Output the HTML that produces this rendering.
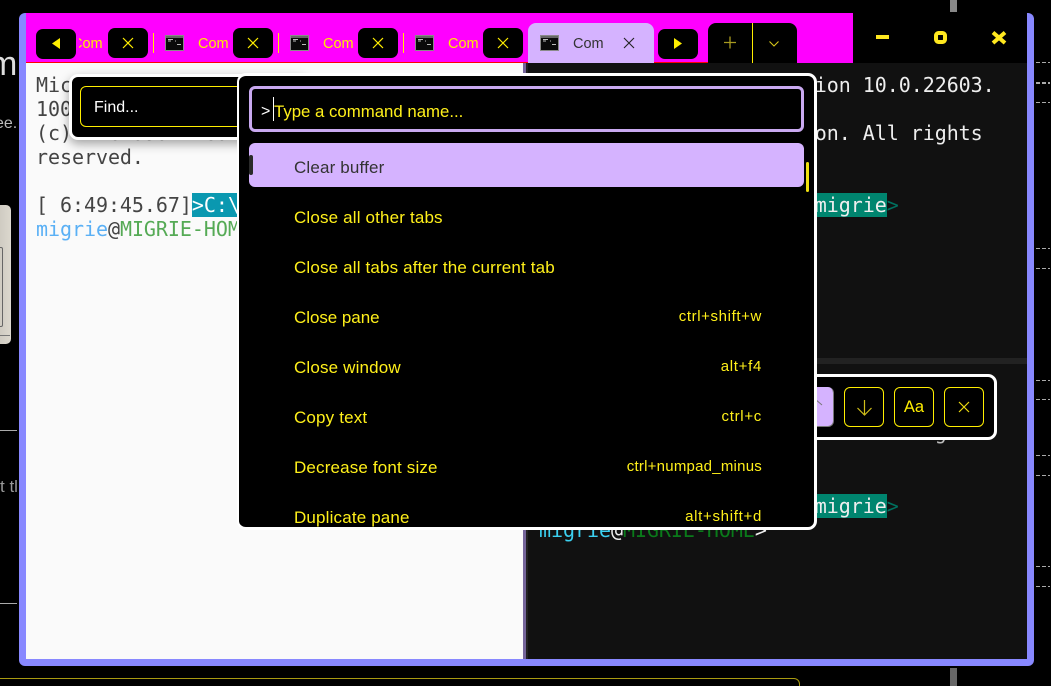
<!DOCTYPE html>
<html><head><meta charset="utf-8"><style>
*{box-sizing:border-box;margin:0;padding:0}
html,body{width:1051px;height:686px;overflow:hidden;background:#000}
body{position:relative;font-family:"Liberation Sans",sans-serif}
.a{position:absolute}
.t{position:absolute;white-space:pre;font-family:"DejaVu Sans Mono",monospace;font-size:20px;letter-spacing:-.05px;line-height:24px;height:24px}
.dash{position:absolute;left:1036px;width:14px;height:1px;background:repeating-linear-gradient(90deg,#aaa 0 4px,#000 4px 6px)}
.btn{position:absolute;background:#000;width:40px;height:30px;border-radius:7px}
.sep{position:absolute;width:1px;height:20px;top:33px;background:#ffee00}
.com{position:absolute;top:34px;font-size:14.5px;line-height:20px;color:#ffee00}
.ico{position:absolute;top:35px}
.row{position:absolute;left:294px;font-size:17px;letter-spacing:.16px;line-height:24px;color:#fff01a;white-space:pre}
.key{position:absolute;right:289px;font-size:15px;letter-spacing:.7px;line-height:20px;color:#fff01a;white-space:pre}
.fb{position:absolute;top:387px;width:40px;height:40px;border:1px solid #ffee00;border-radius:6px;background:#000}
svg{position:absolute;display:block;overflow:visible}
</style></head><body>
<!-- background behind the window -->
<div class="a" style="left:-11px;top:44px;font-size:34px;line-height:40px;color:#ddd">m</div>
<div class="a" style="left:-5px;top:114px;font-size:16px;line-height:20px;color:#bbb">ee.</div>
<div class="a" style="left:0;top:205px;width:11px;height:139px;background:linear-gradient(90deg,#cfcbc2,#dcd8ce);border-radius:0 5px 5px 0"></div>
<div class="a" style="left:-4px;top:247px;width:7px;height:80px;border:1px solid #666;border-radius:2px"></div>
<div class="a" style="left:0;top:335px;width:10px;height:1px;background:#777"></div>
<div class="a" style="left:0;top:430px;width:17px;height:1px;background:#aaa"></div>
<div class="a" style="left:0;top:477px;font-size:17px;line-height:20px;color:#999;white-space:pre">t tl</div>
<div class="a" style="left:0;top:603px;width:17px;height:1px;background:#aaa"></div>
<div class="a" style="left:-10px;top:678px;width:810px;height:30px;border:1px solid #a89a10;border-radius:6px"></div>
<div class="a" style="left:950px;top:0;width:7px;height:12px;background:#888"></div>
<div class="a" style="left:950px;top:668px;width:7px;height:18px;background:#666"></div>
<div class="dash" style="top:62px"></div><div class="dash" style="top:82px;height:2px"></div><div class="dash" style="top:102px"></div>
<div class="dash" style="top:248px"></div><div class="dash" style="top:268px"></div>
<div class="dash" style="top:380px"></div><div class="dash" style="top:399px"></div>
<div class="dash" style="top:455px"></div><div class="dash" style="top:475px"></div>
<div class="dash" style="top:566px"></div><div class="dash" style="top:586px"></div>

<!-- window -->
<div class="a" style="left:19px;top:13px;width:1015px;height:653px;background:#8888ff;border-radius:6px"></div>
<div class="a" style="left:26px;top:13px;width:1001px;height:50px;background:#000"></div>
<div class="a" style="left:26px;top:13px;width:827px;height:50px;background:#ff00ff"></div>
<div class="a" style="left:26px;top:62px;width:682px;height:1px;background:#ff0000"></div>

<!-- tabs -->
<div class="com" style="left:79px;width:25px;overflow:hidden"><span style="display:block;margin-left:-7px">Com</span></div>
<div class="btn" style="left:36px;top:29px"></div>
<svg style="left:0;top:0" width="1051" height="70"><path d="M60 38V49L52 43.5Z" fill="#ffee00"/></svg>

<div class="btn" style="left:108px;top:28px"></div>
<div class="sep" style="left:153px"></div>
<div class="com" style="left:198px">Com</div>
<div class="btn" style="left:233px;top:28px"></div>
<div class="sep" style="left:278px"></div>
<div class="com" style="left:323px">Com</div>
<div class="btn" style="left:358px;top:28px"></div>
<div class="sep" style="left:403px"></div>
<div class="com" style="left:448px">Com</div>
<div class="btn" style="left:483px;top:28px"></div>

<div class="a" style="left:528px;top:23px;width:126px;height:40px;background:#d5b3ff;border-radius:8px 8px 0 0"></div>
<div class="com" style="left:573px;color:#333">Com</div>
<div class="btn" style="left:658px;top:29px"></div>
<div class="a" style="left:708px;top:23px;width:89px;height:40px;background:#000;border-radius:8px 8px 0 0"></div>
<div class="a" style="left:752px;top:23px;width:1px;height:40px;background:#ffee00"></div>

<svg style="left:0;top:0" width="1051" height="70" fill="none">
 <g stroke="#ffee00" stroke-width="1.2">
  <path d="M123 38L133 48M133 38L123 48"/>
  <path d="M248 38L258 48M258 38L248 48"/>
  <path d="M373 38L383 48M383 38L373 48"/>
  <path d="M498 38L508 48M508 38L498 48"/>
 </g>
 <path d="M624 38L634 48M634 38L624 48" stroke="#222" stroke-width="1.1"/>
 <path d="M674 38V49L682 43.5Z" fill="#ffee00"/>
 <path d="M724 42.5H736M730 36.5V48.5" stroke="#a89a20" stroke-width="1.3"/>
 <path d="M769.5 41.5L774 46L778.5 41.5" stroke="#d8c81a" stroke-width="1.1"/>
 <path d="M876 37H889" stroke="#ffe81f" stroke-width="4"/>
 <rect x="936" y="33" width="9" height="9" rx="2.5" stroke="#ffe81f" stroke-width="4"/>
 <path d="M993 32.5L1005 43M1005 32.5L993 43" stroke="#ffe81f" stroke-width="4"/>
 <!-- terminal icons -->
 <g>
  <g><rect x="165.5" y="35.5" width="18" height="15" fill="#0a0a0a" stroke="#8a8a8a"/><rect x="166" y="36" width="17" height="2" fill="#666"/><path d="M168 39.5h5M168 41h3M175 41h1M177 44.5h4" stroke="#bbb" stroke-width="1"/></g>
  <g><rect x="290.5" y="35.5" width="18" height="15" fill="#0a0a0a" stroke="#8a8a8a"/><rect x="291" y="36" width="17" height="2" fill="#666"/><path d="M293 39.5h5M293 41h3M300 41h1M302 44.5h4" stroke="#bbb" stroke-width="1"/></g>
  <g><rect x="415.5" y="35.5" width="18" height="15" fill="#0a0a0a" stroke="#8a8a8a"/><rect x="416" y="36" width="17" height="2" fill="#666"/><path d="M418 39.5h5M418 41h3M425 41h1M427 44.5h4" stroke="#bbb" stroke-width="1"/></g>
  <g><rect x="540.5" y="35.5" width="18" height="15" fill="#0a0a0a" stroke="#8a8a8a"/><rect x="541" y="36" width="17" height="2" fill="#666"/><path d="M543 39.5h5M543 41h3M550 41h1M552 44.5h4" stroke="#bbb" stroke-width="1"/></g>
 </g>
</svg>

<!-- panes -->
<div class="a" style="left:26px;top:63px;width:497px;height:596px;background:#fafafa;overflow:hidden">
 <div class="t" style="left:10px;top:10px;color:#444">Microsoft Windows [Version 10.0.22603.</div>
 <div class="t" style="left:10px;top:34px;color:#444">1000]</div>
 <div class="t" style="left:10px;top:58px;color:#444">(c) Microsoft Corporation. All rights</div>
 <div class="t" style="left:10px;top:82px;color:#444">reserved.</div>
 <div class="t" style="left:10px;top:130px;color:#444">[ 6:49:45.67]<span style="background:#0a98b0;color:#fff">&gt;C:\Users\migrie</span></div>
 <div class="t" style="left:10px;top:154px;color:#444"><span style="color:#5ab0f5">migrie</span>@<span style="color:#55aa55">MIGRIE-HOME</span>&gt;</div>
</div>
<div class="a" style="left:523px;top:63px;width:3px;height:596px;background:#75659a"></div>
<div class="a" style="left:526px;top:63px;width:501px;height:596px;background:#111;border-left:2px solid #222;overflow:hidden">
 <div class="a" style="left:-2px;top:295px;width:503px;height:6px;background:#222"></div>
 <div class="t" style="left:11px;top:10px;color:#eee">Microsoft Windows [Version 10.0.22603.</div>
 <div class="t" style="left:11px;top:58px;color:#eee">(c) Microsoft Corporation. All rights</div>
 <div class="t" style="left:11px;top:130px;color:#eee">[ 6:49:45.67]<span style="background:#00856f;color:#eee">&gt;C:\Users\migrie</span><span style="color:#00705f">&gt;</span></div>
 <div class="t" style="left:11px;top:311px;color:#eee">Microsoft Windows [Version 10.0.22603.</div>
 <div class="t" style="left:11px;top:357px;color:#bbb">(c) Microsoft Corporation. All rights</div>
 <div class="t" style="left:11px;top:431px;color:#eee">[ 6:49:45.67]<span style="background:#00856f;color:#eee">&gt;C:\Users\migrie</span><span style="color:#00705f">&gt;</span></div>
 <div class="t" style="left:11px;top:455px;color:#eee"><span style="color:#3bd0f0">migrie</span>@<span style="color:#0a7a1a">MIGRIE-HOME</span>&gt;</div>
</div>

<!-- left find box -->
<div class="a" style="left:69px;top:74px;width:240px;height:66px;background:#000;border:3px solid #fff;border-radius:9px;box-shadow:0 4px 10px rgba(0,0,0,.35)"></div>
<div class="a" style="left:80px;top:86px;width:200px;height:41px;border:1px solid #ffee00;border-radius:6px"></div>
<div class="a" style="left:94px;top:98px;font-size:16px;line-height:20px;color:#fff">Find...</div>

<!-- right find box -->
<div class="a" style="left:700px;top:374px;width:297px;height:66px;background:#000;border:3px solid #fff;border-radius:9px"></div>
<div class="a" style="left:794px;top:387px;width:40px;height:40px;background:#d5b3ff;border-radius:6px;border-right:1px solid #777;border-bottom:1px solid #777"></div>
<div class="fb" style="left:844px"></div>
<div class="fb" style="left:894px"></div>
<div class="a" style="left:894px;top:397px;width:40px;text-align:center;font-size:16.5px;line-height:20px;color:#ffee00">Aa</div>
<div class="fb" style="left:944px"></div>
<svg style="left:0;top:0" width="1051" height="686" fill="none">
 <path d="M815 399L822 405" stroke="#777" stroke-width="1"/>
 <path d="M864.5 400V415M857.5 408L864.5 415L871.5 408" stroke="#d0be1a" stroke-width="1.2"/>
 <path d="M959 402L969 412M969 402L959 412" stroke="#ecdc10" stroke-width="1.2"/>
</svg>

<!-- command palette -->
<div class="a" style="left:237px;top:73px;width:580px;height:457px;background:#000;border:3px solid #fff;border-left-width:2px;border-radius:9px"></div>
<div class="a" style="left:239px;top:76px;width:575px;height:451px;overflow:hidden;border-radius:6px">
 <div style="position:absolute;left:-239px;top:-76px;width:1051px;height:686px">
  <div class="a" style="left:249px;top:86px;width:555px;height:46px;border:3px solid #c9a9f0;border-radius:6px"></div>
  <div class="a" style="left:261px;top:102px;font-size:16px;line-height:20px;color:#fff">&gt;</div>
  <div class="a" style="left:273px;top:97px;width:1px;height:24px;background:#fff"></div>
  <div class="a" style="left:274px;top:100px;font-size:16.8px;line-height:24px;color:#fff01a;white-space:pre">Type a command name...</div>
  <div class="a" style="left:249px;top:143px;width:555px;height:44px;background:#d5b3ff;border-radius:6px"></div>
  <div class="a" style="left:249px;top:155px;width:4px;height:20px;background:#2a2a2a;border-radius:2px"></div>
  <div class="a" style="left:806px;top:162px;width:3px;height:30px;background:#f0e010;border-radius:2px"></div>
  <div class="row" style="top:156px;color:#333">Clear buffer</div>
  <div class="row" style="top:206px">Close all other tabs</div>
  <div class="row" style="top:256px">Close all tabs after the current tab</div>
  <div class="row" style="top:306px;letter-spacing:-.05px">Close pane</div>
  <div class="row" style="top:356px">Close window</div>
  <div class="row" style="top:406px">Copy text</div>
  <div class="row" style="top:456px">Decrease font size</div>
  <div class="row" style="top:506px">Duplicate pane</div>
  <div class="key" style="top:307px;letter-spacing:.62px">ctrl+shift+w</div>
  <div class="key" style="top:357px">alt+f4</div>
  <div class="key" style="top:407px">ctrl+c</div>
  <div class="key" style="top:457px;letter-spacing:.23px">ctrl+numpad_minus</div>
  <div class="key" style="top:507px">alt+shift+d</div>
 </div>
</div>
</body></html>
